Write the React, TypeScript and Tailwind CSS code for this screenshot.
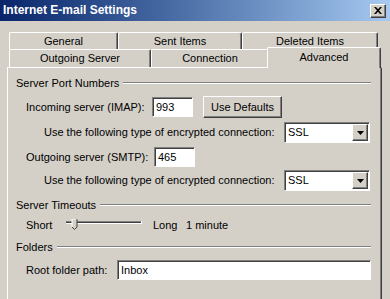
import React from 'react';

const raised = 'border border-t-white border-l-white border-b-[#404040] border-r-[#404040] shadow-[inset_-1px_-1px_0_#808080]';
const sunken = 'border border-t-[#808080] border-l-[#808080] border-b-white border-r-white shadow-[inset_1px_1px_0_#404040]';
const tab = 'flex items-center justify-center border-t border-l border-r border-t-white border-l-white border-r-[#404040] shadow-[inset_-1px_0_0_#808080] rounded-t-[2px] bg-[#d4d0c8]';

const GroupHeader: React.FC<{ title: string }> = ({ title }) => (
  <div className="flex items-center h-[14px]">
    <span className="whitespace-nowrap">{title}</span>
    <div className="flex-1 ml-[4px] flex flex-col">
      <div className="h-px bg-[#808080]" />
      <div className="h-px bg-white" />
    </div>
  </div>
);

const SslSelect: React.FC = () => (
  <div className={`w-[86px] h-[21px] bg-white flex items-center ${sunken}`}>
    <span className="flex-1 pl-[3px]">SSL</span>
    <div className={`w-[16px] h-[17px] mr-px bg-[#d4d0c8] flex items-center justify-center ${raised}`}>
      <svg width="7" height="4" viewBox="0 0 7 4">
        <path d="M0 0h7L3.5 4z" fill="#000" />
      </svg>
    </div>
  </div>
);

const Slider: React.FC = () => (
  <svg width="76" height="12" viewBox="0 0 76 12">
    <rect x="0" y="2" width="75" height="1" fill="#808080" />
    <rect x="0" y="3" width="75" height="1" fill="#404040" />
    <rect x="0" y="4" width="75" height="1" fill="#fff" />
    <rect x="75" y="2" width="1" height="3" fill="#fff" />
    <path d="M6 0h5v8l-2.5 2.5L6 8z" fill="#d4d0c8" />
    <path d="M6 8V0h5" fill="none" stroke="#fff" strokeWidth="1" />
    <path d="M11 0v8l-2.5 2.5L6 8" fill="none" stroke="#404040" strokeWidth="1" />
  </svg>
);

export default function App() {
  return (
    <div className="w-[390px] h-[299px] overflow-hidden bg-[#d4d0c8] text-[11px] leading-[13px] text-black font-['Liberation_Sans',Arial,sans-serif] flex flex-col">
      <div className="h-[21px] shrink-0 bg-gradient-to-r from-[#0a246a] to-[#a6caf0] flex items-center justify-between pl-[3px] pr-[4px]">
        <span className="text-white font-bold text-[12px]">Internet E-mail Settings</span>
        <div className={`w-[16px] h-[14px] bg-[#d4d0c8] flex items-center justify-center ${raised}`}>
          <svg width="8" height="7" viewBox="0 0 8 7">
            <path d="M0 0h2l2 2.2L6 0h2L5 3.5 8 7H6L4 4.8 2 7H0l3-3.5z" fill="#000" />
          </svg>
        </div>
      </div>

      <div className="pt-[11px] pl-[9px] flex flex-col shrink-0">
        <div className="flex h-[17px]">
          <div className={`${tab} w-[109px]`}>General</div>
          <div className={`${tab} w-[124px]`}>Sent Items</div>
          <div className={`${tab} w-[136px]`}>Deleted Items</div>
        </div>
        <div className="flex h-[18px] items-start">
          <div className={`${tab} w-[142px] h-[18px]`}>Outgoing Server</div>
          <div className={`${tab} w-[118px] h-[18px]`}>Connection</div>
          <div className={`${tab} relative z-10 w-[114px] h-[21px] -mt-[2px] -ml-[2px] pb-[2px]`}>Advanced</div>
        </div>
      </div>

      <div className="ml-[7px] w-[375px] h-[240px] shrink-0 border-t border-l border-r border-t-white border-l-white border-r-[#404040] shadow-[inset_-1px_0_0_#808080] pl-[8px] pr-[10px] pt-[8px] flex flex-col">
        <GroupHeader title="Server Port Numbers" />

        <div className="flex items-center h-[22px] mt-[6px] pl-[10px]">
          <span className="w-[126px] whitespace-nowrap">Incoming server (IMAP):</span>
          <div className={`w-[41px] h-[20px] bg-white flex items-center pl-[3px] ${sunken}`}>993</div>
          <div className={`ml-[10px] w-[79px] h-[22px] flex items-center justify-center ${raised}`}>Use Defaults</div>
        </div>

        <div className="flex items-center h-[21px] mt-[4px] pl-[28px]">
          <span className="w-[240px] whitespace-nowrap">Use the following type of encrypted connection:</span>
          <SslSelect />
        </div>

        <div className="flex items-center h-[20px] mt-[4px] pl-[10px]">
          <span className="w-[128px] whitespace-nowrap">Outgoing server (SMTP):</span>
          <div className={`w-[41px] h-[20px] bg-white flex items-center pl-[3px] ${sunken}`}>465</div>
        </div>

        <div className="flex items-center h-[21px] mt-[3px] pl-[28px]">
          <span className="w-[240px] whitespace-nowrap">Use the following type of encrypted connection:</span>
          <SslSelect />
        </div>

        <div className="mt-[7px]">
          <GroupHeader title="Server Timeouts" />
        </div>

        <div className="flex items-center h-[14px] mt-[6px] pl-[10px]">
          <span className="w-[40px]">Short</span>
          <Slider />
          <span className="ml-[11px] w-[33px]">Long</span>
          <span>1 minute</span>
        </div>

        <div className="mt-[8px]">
          <GroupHeader title="Folders" />
        </div>

        <div className="flex items-center h-[20px] mt-[6px] pl-[10px]">
          <span className="w-[91px] whitespace-nowrap">Root folder path:</span>
          <div className={`flex-1 h-[20px] bg-white flex items-center pl-[3px] ${sunken}`}>Inbox</div>
        </div>
      </div>
    </div>
  );
}
